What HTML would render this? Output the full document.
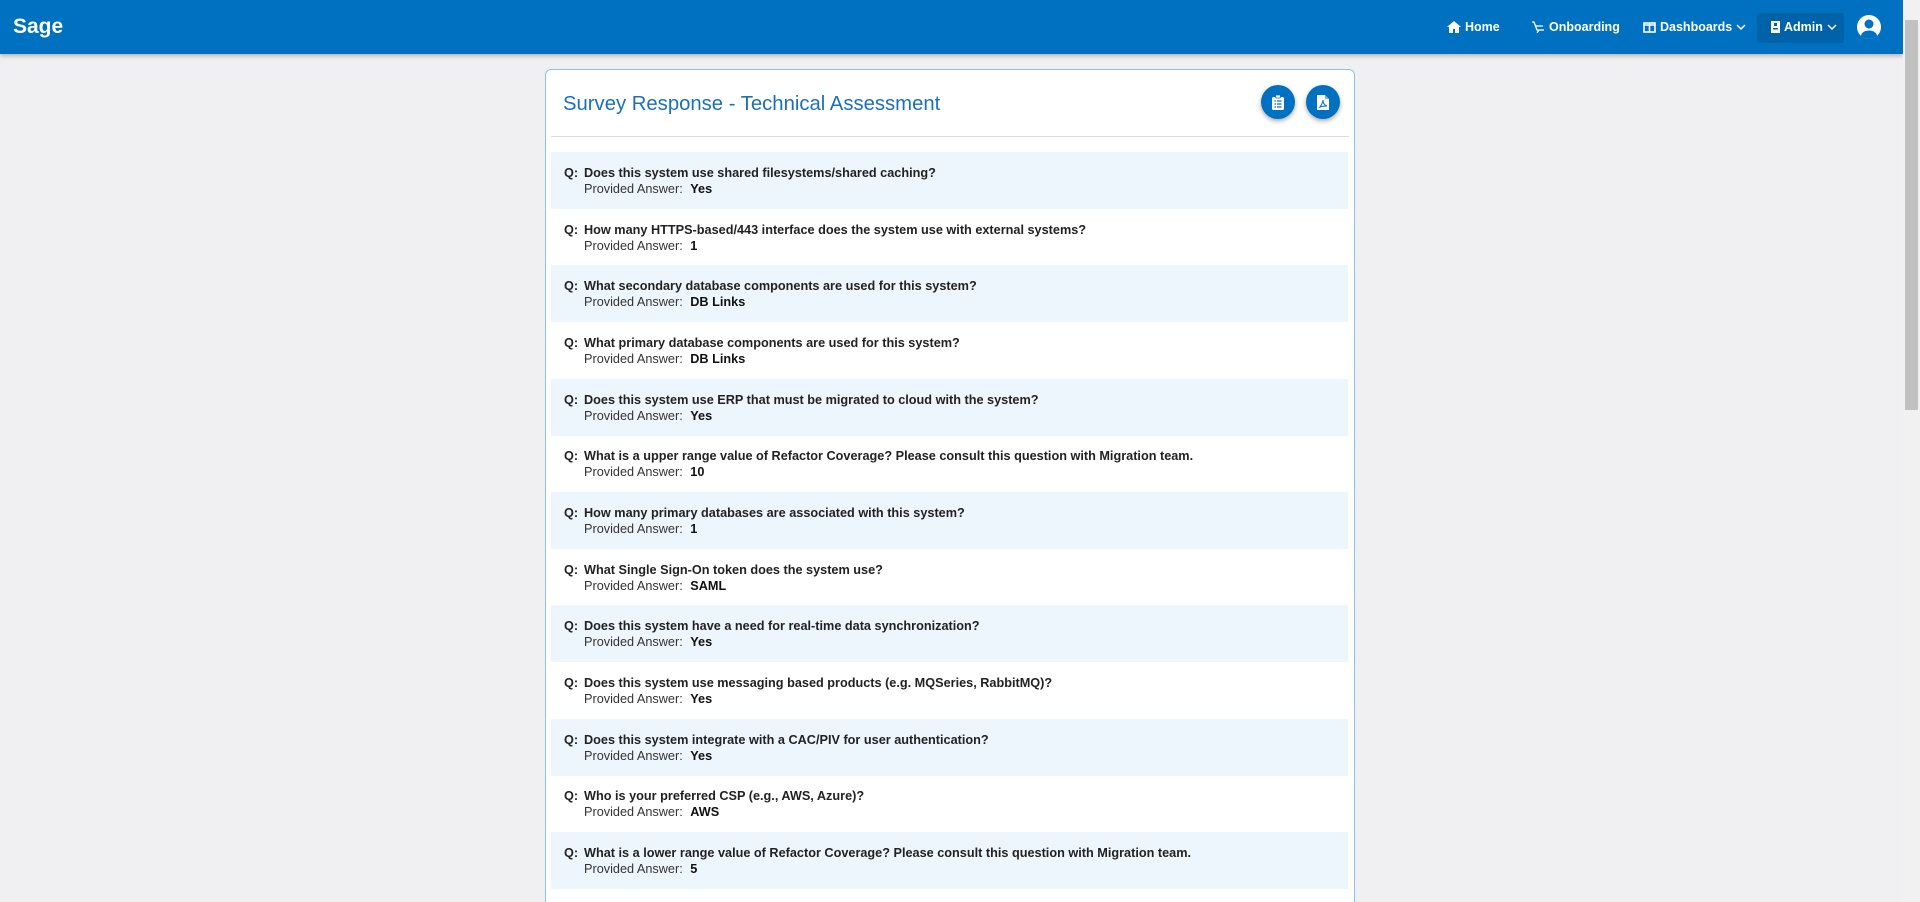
<!DOCTYPE html>
<html><head><meta charset="utf-8"><style>
*{box-sizing:border-box;margin:0;padding:0}
html,body{width:1920px;height:902px;overflow:hidden;background:#f0f0f2;font-family:"Liberation Sans",Arial,sans-serif;position:relative}
.nav{position:absolute;left:0;top:0;width:1903px;height:54px;background:#0070c0;box-shadow:0 2px 4px rgba(0,0,0,.25);color:#fff}
.brand{position:absolute;left:13px;top:15px;font-size:21px;font-weight:bold}
.ni{position:absolute;top:20px;font-size:12.5px;font-weight:bold;display:flex;align-items:center;gap:4px}
.admin{position:absolute;left:1757px;top:13px;width:87px;height:30px;background:#0062a8;border-radius:3px}
.av{position:absolute;left:1857px;top:15px;width:24px;height:24px;border-radius:50%;background:#fff;overflow:hidden}
.sb{position:absolute;left:1903px;top:0;width:17px;height:902px;background:#f1f1f1}
.sb .th{position:absolute;left:2px;top:20px;width:13px;height:390px;background:#c1c1c1}
.card{position:absolute;left:545px;top:69px;width:810px;height:850px;background:#fff;border:1px solid #8cc3ea;border-radius:6px}
.title{position:absolute;left:17px;top:23px;font-size:20.3px;color:#1c70b8}
.btn{position:absolute;top:15px;width:34px;height:34px;border-radius:50%;background:#0070c0;box-shadow:0 2px 5px rgba(0,0,0,.35);display:flex;align-items:center;justify-content:center}
.hr{position:absolute;left:5px;right:5px;top:66px;border-top:1px solid #ddd}
.row{position:absolute;left:551px;width:797px;height:57px;font-size:12.7px;color:#222}
.row.a{background:#eef6fd}
.q{position:absolute;left:13px;top:14px;font-weight:bold}
.q span{position:absolute;left:20px;white-space:nowrap}
.ans{position:absolute;left:33px;top:30px;color:#333;white-space:nowrap}
.ans b{color:#111;margin-left:4px}
</style></head><body>
<div class="nav">
<div class="brand">Sage</div>
<div class="ni" style="left:1447px"><svg width="14" height="12" viewBox="0 0 14 12"><path d="M7 0 0 6h2v6h4V8h2v4h4V6h2z" fill="#fff"/></svg>Home</div>
<div class="ni" style="left:1531px"><svg width="14" height="12" viewBox="0 0 14 12" fill="none" stroke="#fff" stroke-width="1.3"><path d="M1 1h2l3 8h7M5 5h7M8 9l-2 3"/></svg>Onboarding</div>
<div class="ni" style="left:1643px"><svg width="13" height="11" viewBox="0 0 13 11" fill="none" stroke="#fff" stroke-width="1.6"><rect x="1" y="1" width="11" height="9"/><path d="M6.5 1v9M1 3h11"/></svg>Dashboards <svg width="10" height="7" viewBox="0 0 10 7"><path d="M1 1l4 4 4-4" stroke="#fff" stroke-width="1.5" fill="none"/></svg></div>
<div class="admin"></div>
<div class="ni" style="left:1771px"><svg width="9" height="12" viewBox="0 0 9 12"><rect width="9" height="12" fill="#fff"/><rect x="3" y="2" width="3" height="3" fill="#0062a8"/><rect x="2" y="7" width="5" height="1.5" fill="#0062a8"/></svg>Admin <svg width="10" height="7" viewBox="0 0 10 7"><path d="M1 1l4 4 4-4" stroke="#fff" stroke-width="1.5" fill="none"/></svg></div>
<div class="av"><svg width="24" height="24" viewBox="0 0 24 24"><circle cx="12" cy="9" r="4.5" fill="#0070c0"/><ellipse cx="12" cy="21" rx="8" ry="5.5" fill="#0070c0"/></svg></div>
</div>
<div class="sb"><div class="th"></div></div>
<div class="card">
<div class="title">Survey Response - Technical Assessment</div>
<div class="btn" style="left:715px"><svg width="12" height="15" viewBox="0 0 12 15"><rect y="2" width="12" height="13" rx="1.5" fill="#fff"/><rect x="3.5" y="0" width="5" height="3" rx="1" fill="#fff" stroke="#0070c0" stroke-width=".8"/><path d="M2.5 6h1.5M5 6h4.5M2.5 9h1.5M5 9h4.5M2.5 12h1.5M5 12h4.5" stroke="#0070c0" stroke-width="1.3"/></svg></div>
<div class="btn" style="left:760px"><svg width="12" height="15" viewBox="0 0 12 15"><path d="M0 0h8l4 4v11H0z" fill="#fff"/><path d="M8 0v4h4" fill="#0070c0" opacity=".5"/><path d="M3 12c2-3 3-5 3-7 0 3 1 5 4 6-3 0-5 0-7 1z" fill="none" stroke="#0070c0" stroke-width="1"/></svg></div>
<div class="hr"></div>
</div>
<div class="row a" style="top:152px"><div class="q">Q:<span>Does this system use shared filesystems/shared caching?</span></div><div class="ans">Provided Answer: <b>Yes</b></div></div>
<div class="row" style="top:209px"><div class="q">Q:<span>How many HTTPS-based/443 interface does the system use with external systems?</span></div><div class="ans">Provided Answer: <b>1</b></div></div>
<div class="row a" style="top:265px"><div class="q">Q:<span>What secondary database components are used for this system?</span></div><div class="ans">Provided Answer: <b>DB Links</b></div></div>
<div class="row" style="top:322px"><div class="q">Q:<span>What primary database components are used for this system?</span></div><div class="ans">Provided Answer: <b>DB Links</b></div></div>
<div class="row a" style="top:379px"><div class="q">Q:<span>Does this system use ERP that must be migrated to cloud with the system?</span></div><div class="ans">Provided Answer: <b>Yes</b></div></div>
<div class="row" style="top:435px"><div class="q">Q:<span>What is a upper range value of Refactor Coverage? Please consult this question with Migration team.</span></div><div class="ans">Provided Answer: <b>10</b></div></div>
<div class="row a" style="top:492px"><div class="q">Q:<span>How many primary databases are associated with this system?</span></div><div class="ans">Provided Answer: <b>1</b></div></div>
<div class="row" style="top:549px"><div class="q">Q:<span>What Single Sign-On token does the system use?</span></div><div class="ans">Provided Answer: <b>SAML</b></div></div>
<div class="row a" style="top:605px"><div class="q">Q:<span>Does this system have a need for real-time data synchronization?</span></div><div class="ans">Provided Answer: <b>Yes</b></div></div>
<div class="row" style="top:662px"><div class="q">Q:<span>Does this system use messaging based products (e.g. MQSeries, RabbitMQ)?</span></div><div class="ans">Provided Answer: <b>Yes</b></div></div>
<div class="row a" style="top:719px"><div class="q">Q:<span>Does this system integrate with a CAC/PIV for user authentication?</span></div><div class="ans">Provided Answer: <b>Yes</b></div></div>
<div class="row" style="top:775px"><div class="q">Q:<span>Who is your preferred CSP (e.g., AWS, Azure)?</span></div><div class="ans">Provided Answer: <b>AWS</b></div></div>
<div class="row a" style="top:832px"><div class="q">Q:<span>What is a lower range value of Refactor Coverage? Please consult this question with Migration team.</span></div><div class="ans">Provided Answer: <b>5</b></div></div>
</body></html>
